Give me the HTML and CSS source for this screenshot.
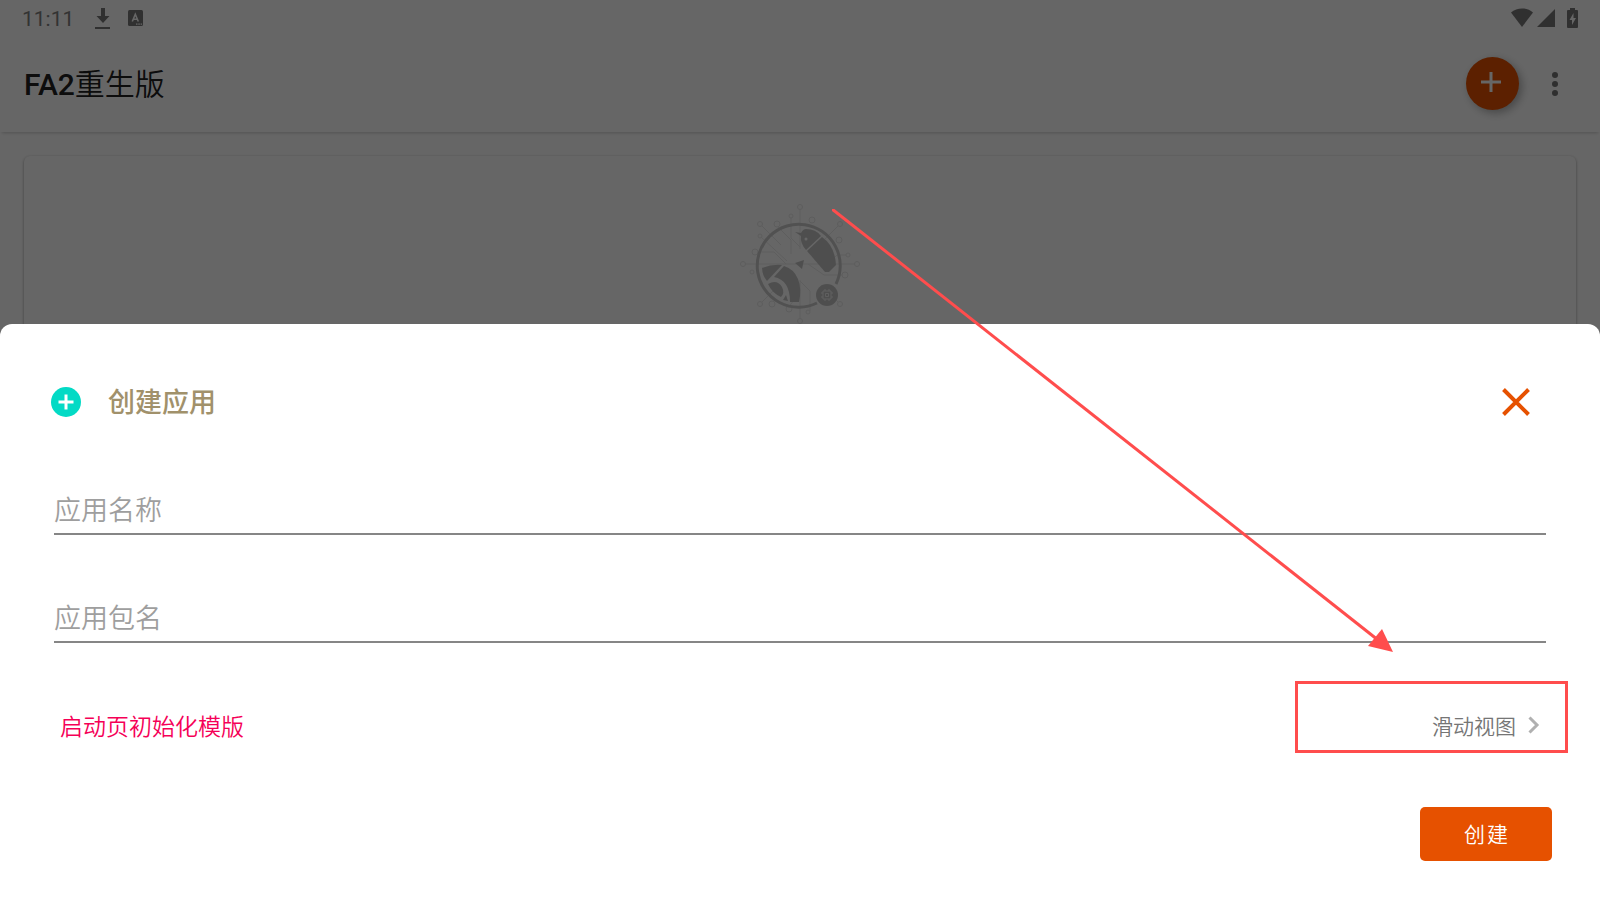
FILE: index.html
```html
<!DOCTYPE html>
<html lang="zh-CN">

<head>
    <meta charset="UTF-8">
    <meta name="viewport" content="width=device-width, initial-scale=1.0">
    <title>FA2重生版</title>
    <link rel="stylesheet" href="styles.css">
</head>

<body>
    <div class="app">
        <div class="status">
            <span class="time">11:11</span>
            <svg class="ic-down" width="16" height="22" viewBox="0 0 16 22">
                <path d="M6 1h4v8h4.500L8 16 1.500 9H6zM0 20h15v2H0z" />
            </svg>
            <svg class="ic-a" width="16" height="16" viewBox="0 0 16 16">
                <rect width="15" height="16" rx="1.5" />
                <path d="M4.300 11.500L7.300 4.300l3 7.200M5.500 9.300h3.600" fill="none" stroke="#fff" stroke-width="1.600" />
                <path d="M8 13.500h1.500v1.200H8zM10.300 13.500h1.500v1.200h-1.500zM12.600 13.500h1.500v1.200h-1.500z" fill="#fff" />
            </svg>
            <div class="signals">
                <svg width="22" height="20" viewBox="0 0 22 20">
                    <path d="M0 4.500C6-1 16-1 22 4.500L11 19z" />
                </svg>
                <svg width="18" height="20" viewBox="0 0 18 20">
                    <path d="M18 1v18H0z" />
                </svg>
                <svg class="battery" width="11" height="20" viewBox="0 0 11 20">
                    <path d="M3 0h5v2h2q1 0 1 1v16q0 1-1 1H1q-1 0-1-1V3q0-1 1-1h2z" />
                    <path d="M6.500 5L2.500 12h2.500v5L9 10H6.500z" fill="#fff" />
                </svg>
            </div>
        </div>
        <div class="header">
            <h1>FA2<span>重生版</span></h1>
            <button class="fab" aria-label="新建">
                <svg width="20" height="20" viewBox="0 0 20 20">
                    <path d="M10 0v20M0 10h20" fill="none" stroke="#fff" stroke-width="3" />
                </svg>
            </button>
            <button class="more" aria-label="更多">
                <svg width="6" height="24" viewBox="0 0 6 24">
                    <circle cx="3" cy="3" r="3" />
                    <circle cx="3" cy="12" r="3" />
                    <circle cx="3" cy="21" r="3" />
                </svg>
            </button>
        </div>
        <div class="card">
            <svg class="logo" width="120" height="120" viewBox="740 204 120 120">
                <g fill="none" stroke="#ececec" stroke-width="1">
                    <path d="M800 209v40M800 280v39M745 264h110M761 225l20 20M839 225l-14 14M761 303l14-14M839 303l-18-18" />
                    <path d="M791 218v20l9 9M777 226l14 14v14M761 237l26 24M756 252h18l12 12M847 255h-10l-8 8M844 275h-20l-16-11M810 311v-20l-10-10M788 308l6-8" />
                </g>
                <g fill="#fff" stroke="#e9e9e9" stroke-width="1">
                    <circle cx="800" cy="207" r="2.500" /><circle cx="800" cy="321" r="2.500" />
                    <circle cx="743" cy="264" r="2.500" /><circle cx="857" cy="264" r="2.500" />
                    <circle cx="760" cy="224" r="2.500" /><circle cx="840" cy="224" r="2.500" />
                    <circle cx="760" cy="304" r="2.500" /><circle cx="840" cy="304" r="2.500" />
                    <circle cx="791" cy="216" r="2" /><circle cx="777" cy="224" r="3" />
                    <circle cx="812" cy="220" r="3" /><circle cx="760" cy="236" r="2" />
                    <circle cx="755" cy="252" r="3" /><circle cx="752" cy="272" r="2" />
                    <circle cx="839" cy="240" r="3" /><circle cx="848" cy="255" r="2" />
                    <circle cx="845" cy="275" r="3" /><circle cx="808" cy="312" r="2" />
                    <circle cx="789" cy="309" r="3" /><circle cx="772" cy="304" r="3" />
                </g>
                <path d="M836 284A41.500 41.500 0 1 0 817 303" fill="none" stroke="#cbcbcb" stroke-width="3" />
                <g fill="#c4c4c4">
                    <path d="M795 232l6 1q2-4 5-4 10 0 15 7l-15 14q-6-7-5-14z" />
                    <path d="M822 237q13 9 14 28l-7 7h-4l-18-21z" />
                    <path d="M795 263l9-3-2 9z" />
                    <path d="M762 268q10-4 20-3l-15 16q-5-6-5-13z" />
                    <path d="M774 277l10-11q10 3 14 13 4 10 1 23h-9q0-22-16-25z" />
                    <path d="M768 284q9-5 14 3 3 6-1 10-9-4-13-13zM783 300l3-5 2 6z" />
                    <circle cx="827" cy="295" r="11" />
                </g>
                <circle cx="806" cy="239" r="1.500" fill="#fff" />
                <path d="M823 291h8v8h-8zM825.500 293.500h3v3h-3zM825 291v-2M829 291v-2M825 301v-2M829 301v-2M821 293h2M821 297h2M831 293h2M831 297h2" fill="none" stroke="#eee" />
            </svg>
        </div>
    </div>
    <div class="scrim"></div>

    <form class="sheet">
        <div class="sheet-head">
            <svg width="30" height="30" viewBox="0 0 30 30">
                <circle cx="15" cy="15" r="15" fill="#03dac5" />
                <path d="M15 7.500v15M7.500 15h15" stroke="#fff" stroke-width="3" />
            </svg>
            <h2>创建应用</h2>
            <button type="button" class="close" aria-label="关闭">
                <svg width="28" height="28" viewBox="0 0 28 28">
                    <path d="M1.500 1.500l25 25M26.500 1.500l-25 25" stroke="#e65100" stroke-width="4" />
                </svg>
            </button>
        </div>
        <input type="text" placeholder="应用名称" aria-label="应用名称">
        <input type="text" placeholder="应用包名" aria-label="应用包名">
        <div class="template">
            <span id="tpl">启动页初始化模版</span>
            <button type="button" class="option" aria-describedby="tpl">
                滑动视图
                <svg width="12" height="18" viewBox="0 0 12 18">
                    <path d="M1.500 1.500L9 9l-7.500 7.500" fill="none" stroke="#b0b0b0" stroke-width="3" />
                </svg>
            </button>
        </div>
        <button type="submit" class="create">创建</button>
    </form>

    <svg class="arrow" width="562" height="444" viewBox="0 0 562 444">
        <path d="M0 0L546 431" stroke="#ff4d4d" stroke-width="3" />
        <path d="M561 443l-11-23-14 17z" fill="#ff4d4d" />
    </svg>
</body>

</html>
```
FILE: styles.css
```css
*,
*::after {
    box-sizing: border-box;
}

body,
h1,
h2 {
    margin: 0;
}

body {
    position: relative;
    min-height: 100vh;
    overflow: hidden;
    background: #fff;
    font-family: Roboto, "Noto Sans CJK SC", sans-serif;
    font-weight: 350;
}

button {
    padding: 0;
    border: 0;
    background: none;
    font-family: inherit;
    font-weight: inherit;
    cursor: pointer;
}

svg {
    display: block;
}

.status {
    display: flex;
    align-items: center;
    height: 36px;
    padding: 0 22px;
    color: #808080;
    fill: #787878;
}

.time {
    padding-top: 2px;
    font-size: 21px;
    font-weight: 400;
}

.ic-down {
    margin-left: 21px;
}

.ic-a {
    margin-left: 17px;
}

.signals {
    display: flex;
    gap: 4px;
    margin-left: auto;
}

.battery {
    margin-left: 8px;
}

.header {
    display: flex;
    align-items: center;
    height: 96px;
    padding: 0 42px 0 24px;
    box-shadow: 0 3px 3px -2px rgba(0, 0, 0, 0.2);
}

.header h1 {
    flex: 1;
    padding-bottom: 4px;
    color: #212121;
    font-size: 30px;
    font-weight: 500;
}

.header h1 span {
    font-weight: 350;
}

.fab {
    display: flex;
    align-items: center;
    justify-content: center;
    width: 53px;
    height: 53px;
    margin-bottom: 2px;
    padding: 0 3px 2px 0;
    border-radius: 50%;
    background: #e65100;
    box-shadow: 3px 3px 9px rgba(0, 0, 0, 0.3);
}

.more {
    margin-left: 33px;
    fill: #757575;
}

.card {
    display: flex;
    justify-content: center;
    height: 600px;
    margin: 24px;
    padding-top: 48px;
    border-radius: 6px;
    box-shadow: 0 1px 3px rgba(0, 0, 0, 0.4);
}

.app {
    position: absolute;
    top: 0;
    left: 0;
    right: 0;
}

.scrim {
    position: absolute;
    top: 0;
    left: 0;
    right: 0;
    bottom: 0;
    background: rgba(0, 0, 0, 0.6);
}

.sheet {
    position: absolute;
    left: 0;
    right: 0;
    bottom: 0;
    display: flex;
    flex-direction: column;
    padding: 53px 48px 39px 51px;
    border-radius: 12px 12px 0 0;
    background: #fff;
}

.sheet-head {
    display: flex;
    align-items: center;
    height: 50px;
    padding-right: 22px;
}

.sheet-head h2 {
    flex: 1;
    margin-left: 27px;
    padding-bottom: 4px;
    color: #a1916b;
    font-size: 27px;
    font-weight: 500;
}

.sheet input {
    height: 60px;
    margin: 48px 6px 0 3px;
    padding: 14px 0 0;
    border: 0;
    border-bottom: 2px solid #868686;
    outline: none;
    background: none;
    color: #212121;
    font-family: inherit;
    font-size: 27px;
    font-weight: inherit;
}

.sheet input::placeholder {
    color: #9e9e9e;
}

.template {
    display: flex;
    align-items: center;
    justify-content: space-between;
    height: 72px;
    margin-top: 46px;
    padding-left: 9px;
    color: #f50057;
    font-size: 23px;
}

.option {
    position: relative;
    display: flex;
    align-items: center;
    gap: 12px;
    padding-right: 12px;
    color: #757575;
    font-size: 21px;
}

/* red frame round the template picker */
.option::after {
    content: "";
    position: absolute;
    top: 50%;
    right: -16px;
    width: 273px;
    height: 72px;
    margin-top: -44px;
    border: 3px solid #ff4d4d;
}

.create {
    align-self: flex-end;
    width: 132px;
    height: 54px;
    margin-top: 46px;
    padding: 0 0 2px 2px;
    border-radius: 5px;
    background: #e65100;
    color: #fff;
    font-size: 21px;
    letter-spacing: 2px;
}

.arrow {
    position: absolute;
    top: 209px;
    right: 206px;
}
```
